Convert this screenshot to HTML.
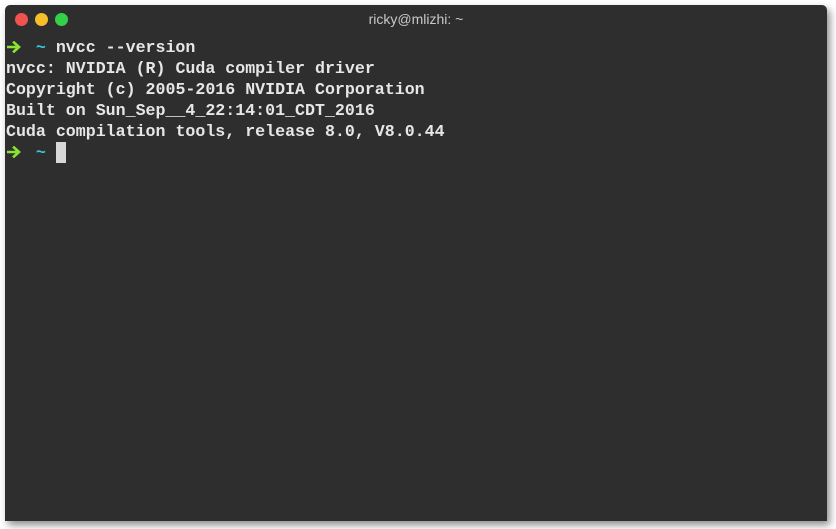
<!DOCTYPE html>
<html><head><meta charset="utf-8"><style>
html,body{margin:0;padding:0;width:836px;height:529px;background:#fff;overflow:hidden}
.win{position:absolute;left:5px;top:5px;width:822px;height:516px;background:#2e2e2e;border-radius:5px 5px 0 0;box-shadow:3px 4px 8px rgba(0,0,0,0.45)}
.dot{position:absolute;top:8px;width:13px;height:13px;border-radius:50%}
.title{position:absolute;top:6px;left:0;width:100%;text-align:center;color:#c8c8c8;font:14px "Liberation Sans",sans-serif}
.term{position:absolute;left:1px;top:32px;font:bold 16.63px/21px "Liberation Mono",monospace;color:#e6e6e6;white-space:pre;letter-spacing:0}
.g{display:inline-block;width:1ch;position:relative;height:21px;vertical-align:top}
.g svg{position:absolute;left:1px;top:4px}
.c{color:#34c7d8}
.cur{display:inline-block;width:10px;height:21px;background:#d8d8d8;vertical-align:top}
</style></head><body>
<div class="win">
<div class="dot" style="left:10px;background:#f0524f"></div>
<div class="dot" style="left:30px;background:#f7be2b"></div>
<div class="dot" style="left:50px;background:#33d04a"></div>
<div class="title">ricky@mlizhi: ~</div>
<div class="term"><span class="g"><svg width="14" height="12" viewBox="0 0 14 12"><path d="M1 6H11M7 1.5L12 6L7 10.5" stroke="#8ae234" stroke-width="2.6" fill="none" stroke-linecap="square"/></svg></span>  <span class="c">~</span> nvcc --version
nvcc: NVIDIA (R) Cuda compiler driver
Copyright (c) 2005-2016 NVIDIA Corporation
Built on Sun_Sep__4_22:14:01_CDT_2016
Cuda compilation tools, release 8.0, V8.0.44
<span class="g"><svg width="14" height="12" viewBox="0 0 14 12"><path d="M1 6H11M7 1.5L12 6L7 10.5" stroke="#8ae234" stroke-width="2.6" fill="none" stroke-linecap="square"/></svg></span>  <span class="c">~</span> <span class="cur"></span></div>
</div>
</body></html>
